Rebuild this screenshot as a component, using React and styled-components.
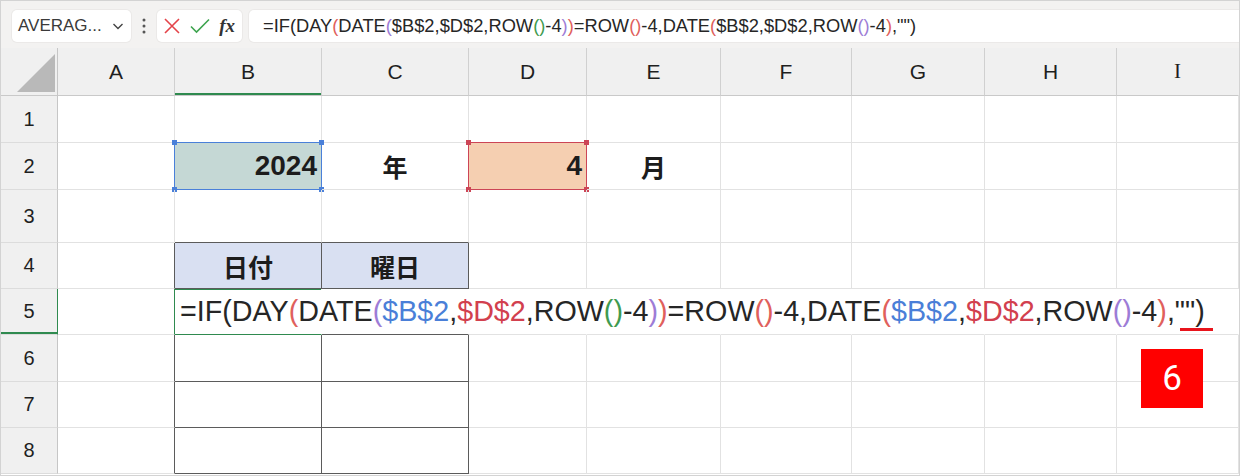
import React from 'react';
import styled, { createGlobalStyle } from 'styled-components';

const GlobalStyle = createGlobalStyle`
  html, body {
    margin: 0;
    padding: 0;
    background: #ffffff;
  }
`;

const UI_FONT = `"Liberation Sans", "Noto Sans CJK JP", sans-serif`;
const CJK_FONT = `"Noto Sans CJK JP", "Liberation Sans", sans-serif`;

const COLUMNS = ['A', 'B', 'C', 'D', 'E', 'F', 'G', 'H', 'I'];
const ROW_HEIGHTS = [47, 47, 53, 46, 46, 47, 46, 46];

const GRID = '#e2e2e2';
const DARK = '#5b5b5b';
const GREEN = '#2f8a4f';

const TOKEN_COLORS = {
  k: '#262626',
  r: '#e0605c',
  p: '#9d7cd6',
  g: '#3f9b50',
  blue: '#4a7fd8',
  red: '#d2404e'
};

// formula split into coloured runs (parens by nesting level, refs by colour)
const formula = [
  ['=IF(', 'k'],
  ['DAY', 'k'],
  ['(', 'r'],
  ['DATE', 'k'],
  ['(', 'p'],
  ['$B$2', 'blue'],
  [',', 'k'],
  ['$D$2', 'red'],
  [',ROW', 'k'],
  ['()', 'g'],
  ['-4', 'k'],
  [')', 'p'],
  [')', 'r'],
  ['=ROW', 'k'],
  ['()', 'r'],
  ['-4,DATE', 'k'],
  ['(', 'r'],
  ['$B$2', 'blue'],
  [',', 'k'],
  ['$D$2', 'red'],
  [',ROW', 'k'],
  ['()', 'p'],
  ['-4', 'k'],
  [')', 'r'],
  [',"")', 'k']
];

const cells = {
  B2: { text: '2024', align: 'right', bold: true, fill: '#c5d8d5', frame: '#4a80d9' },
  C2: { text: '年', cjk: true, bold: true },
  D2: { text: '4', align: 'right', bold: true, fill: '#f5cfb1', frame: '#cc4556' },
  E2: { text: '月', cjk: true, bold: true },
  B4: { text: '日付', cjk: true, bold: true, fill: '#d9e0f2' },
  C4: { text: '曜日', cjk: true, bold: true, fill: '#d9e0f2' }
};

const inTable = (c, r) => c >= 1 && c <= 2 && r >= 4 && r <= 8;

const Frame = styled.div`
  position: relative;
  width: 1240px;
  height: 476px;
  box-sizing: border-box;
  border: 1px solid #d3d3d3;
  background: #ffffff;
  overflow: hidden;
  font-family: ${UI_FONT};
  color: #222222;
`;

const TopBar = styled.div`
  display: flex;
  align-items: flex-start;
  height: 47px;
  box-sizing: border-box;
  padding: 9px 0 0 11px;
  background: #f3f2f1;
`;

const Box = styled.div`
  display: flex;
  align-items: center;
  height: 32px;
  box-sizing: border-box;
  background: #ffffff;
  border-radius: 5px;
  box-shadow: 0 0 0 1px #ebe9e8;
`;

const NameBox = styled(Box)`
  width: 119px;
  padding: 0 6px 0 6px;
  justify-content: space-between;
  font-size: 17px;
  color: #3a3a3a;
`;

const Dots = styled.div`
  display: flex;
  justify-content: center;
  width: 26px;
  height: 32px;
  align-items: center;
`;

const IconBox = styled(Box)`
  width: 85px;
  padding: 0 6px 0 6px;
  justify-content: space-between;
`;

const Fx = styled.span`
  font-family: "Liberation Serif", serif;
  font-style: italic;
  font-weight: 700;
  font-size: 19px;
  color: #333333;
  padding-right: 1px;
`;

const FormulaBox = styled(Box)`
  flex: 1;
  margin: 0 0 0 7px;
  padding-left: 14px;
  border-radius: 5px 0 0 5px;
  font-size: 18.3px;
  white-space: nowrap;
`;

const Sheet = styled.div`
  display: grid;
  grid-template-columns: 57px 117px 147px 147px 118px 134px 131px 133px 132px 1fr;
  grid-template-rows: 48px ${ROW_HEIGHTS.map((h) => `${h}px`).join(' ')};
  background: #ffffff;
`;

const Header = styled.div`
  display: flex;
  align-items: center;
  justify-content: center;
  background: #f0f0f0;
  border-right: 1px solid ${(p) => p.$right || '#d0d0d0'};
  border-bottom: 1px solid #c9c9c9;
  box-shadow: ${(p) => (p.$active ? `inset 0 -2px 0 ${GREEN}` : 'none')};
  font-size: 21px;
  font-family: ${(p) => (p.$serif ? '"Liberation Serif", serif' : UI_FONT)};
  color: #1f1f1f;
`;

const RowHeader = styled(Header)`
  border-right: 1px solid ${(p) => (p.$active ? GREEN : '#c6c6c6')};
  border-bottom: 1px solid #dcdcdc;
  font-size: 20px;
`;

const Corner = styled(Header)`
  align-items: flex-end;
  justify-content: flex-end;
  padding: 0 2px 3px 0;
  border-right: 1px solid #c6c6c6;
`;

const Cell = styled.div`
  position: relative;
  display: flex;
  align-items: center;
  justify-content: ${(p) =>
    p.$align === 'right' ? 'flex-end' : p.$align === 'left' ? 'flex-start' : 'center'};
  padding: ${(p) => (p.$align === 'left' ? '0 0 0 5px' : '0 4px')};
  min-width: 0;
  background: ${(p) => p.$fill || 'transparent'};
  border-right: 1px solid ${(p) => p.$right};
  border-bottom: 1px solid ${(p) => p.$bottom};
  box-shadow: ${(p) => p.$inset || 'none'};
  font-family: ${(p) => (p.$cjk ? CJK_FONT : UI_FONT)};
  font-size: ${(p) => (p.$cjk ? 25 : p.$size || 28)}px;
  font-weight: ${(p) => (p.$bold ? 700 : 400)};
  white-space: nowrap;
  z-index: ${(p) => (p.$front ? 2 : 'auto')};
  color: #1c1c1c;
`;

const RefFrame = styled.div`
  position: absolute;
  top: -1px;
  left: -1px;
  right: -1px;
  bottom: -1px;
  border: 1px solid ${(p) => p.$color};
  pointer-events: none;
`;

const Handle = styled.span`
  position: absolute;
  width: 5px;
  height: 5px;
  background: ${(p) => p.$color};
  ${(p) => (p.$top ? 'top: -3px;' : 'bottom: -3px;')}
  ${(p) => (p.$left ? 'left: -3px;' : 'right: -3px;')}
`;

const Token = styled.span`
  color: ${(p) => TOKEN_COLORS[p.$c]};
`;

const Badge = styled.div`
  position: absolute;
  left: 1140px;
  top: 348px;
  width: 62px;
  height: 59px;
  display: flex;
  align-items: center;
  justify-content: center;
  background: #ff0000;
  color: #ffffff;
  font-size: 35px;
  font-family: "Roboto", "Liberation Sans", sans-serif;
  font-weight: 400;
`;

const Underline = styled.div`
  position: absolute;
  left: 1179px;
  top: 327px;
  width: 33px;
  height: 3px;
  background: #e8141c;
`;

const Formula = ({ refsColored }) => (
  <>
    {formula.map(([text, c], i) => {
      const color = !refsColored && (c === 'blue' || c === 'red') ? 'k' : c;
      return (
        <Token key={i} $c={color}>
          {text}
        </Token>
      );
    })}
  </>
);

const SheetCell = ({ c, r }) => {
  const id = `${COLUMNS[c]}${r}`;
  const data = cells[id] || {};
  const editing = r === 5 && c >= 1;

  let right = inTable(c, r) || inTable(c + 1, r) ? DARK : GRID;
  let bottom = inTable(c, r) || inTable(c, r + 1) ? DARK : GRID;
  let inset;

  if (editing) right = 'transparent';
  if (r === 5 && c === 0) right = GREEN;
  if (id === 'B5') {
    bottom = GREEN;
    inset = `inset 0 1px 0 ${GREEN}`;
  }

  return (
    <Cell
      $right={right}
      $bottom={bottom}
      $inset={inset}
      $fill={data.fill}
      $align={id === 'B5' ? 'left' : data.align}
      $bold={data.bold}
      $cjk={data.cjk}
      $size={id === 'B5' ? 28.7 : 28}
      $front={id === 'B5'}
    >
      {id === 'B5' ? <Formula refsColored /> : data.text}
      {data.frame && (
        <RefFrame $color={data.frame}>
          <Handle $color={data.frame} $top $left />
          <Handle $color={data.frame} $top />
          <Handle $color={data.frame} $left />
          <Handle $color={data.frame} />
        </RefFrame>
      )}
    </Cell>
  );
};

export default function App() {
  return (
    <>
      <GlobalStyle />
      <Frame>
        <TopBar>
          <NameBox>
            <span>AVERAG...</span>
            <svg width="14" height="14" viewBox="0 0 14 14">
              <path d="M2.5 5l4.5 4.5L11.5 5" fill="none" stroke="#444" strokeWidth="1.4" />
            </svg>
          </NameBox>
          <Dots>
            <svg width="4" height="16" viewBox="0 0 4 16">
              <circle cx="2" cy="2" r="1.5" fill="#555" />
              <circle cx="2" cy="8" r="1.5" fill="#555" />
              <circle cx="2" cy="14" r="1.5" fill="#555" />
            </svg>
          </Dots>
          <IconBox>
            <svg width="18" height="18" viewBox="0 0 18 18">
              <path d="M2 2l14 14M16 2L2 16" stroke="#e4444a" strokeWidth="1.6" fill="none" />
            </svg>
            <svg width="22" height="18" viewBox="0 0 22 18">
              <path d="M2 9.5l5.5 5.5L20 2.5" stroke="#3ea44f" strokeWidth="1.6" fill="none" />
            </svg>
            <Fx>fx</Fx>
          </IconBox>
          <FormulaBox>
            <Formula />
          </FormulaBox>
        </TopBar>
        <Sheet>
          <Corner>
            <svg width="38" height="38" viewBox="0 0 38 38">
              <polygon points="0,38 38,38 38,0" fill="#b9b9b9" />
            </svg>
          </Corner>
          {COLUMNS.map((col, i) => (
            <Header
              key={col}
              $active={col === 'B'}
              $right={i === COLUMNS.length - 1 ? 'transparent' : undefined}
              $serif={col === 'I'}
            >
              {col}
            </Header>
          ))}
          {ROW_HEIGHTS.map((_, ri) => {
            const r = ri + 1;
            return (
              <React.Fragment key={r}>
                <RowHeader $active={r === 5}>{r}</RowHeader>
                {COLUMNS.map((col, c) => (
                  <SheetCell key={col} c={c} r={r} />
                ))}
              </React.Fragment>
            );
          })}
        </Sheet>
        <Underline />
        <Badge>6</Badge>
      </Frame>
    </>
  );
}
